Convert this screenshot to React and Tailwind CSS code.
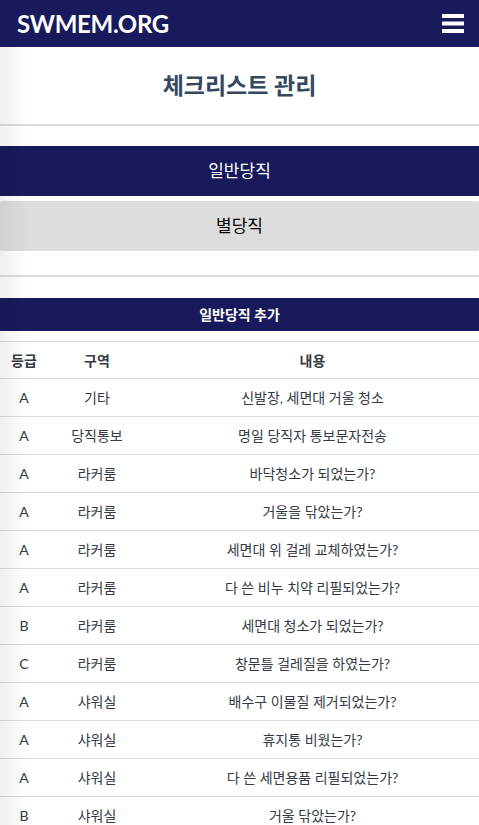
import React from "react";

const rows = [
  ["A", "기타", "신발장, 세면대 거울 청소"],
  ["A", "당직통보", "명일 당직자 통보문자전송"],
  ["A", "라커룸", "바닥청소가 되었는가?"],
  ["A", "라커룸", "거울을 닦았는가?"],
  ["A", "라커룸", "세면대 위 걸레 교체하였는가?"],
  ["A", "라커룸", "다 쓴 비누 치약 리필되었는가?"],
  ["B", "라커룸", "세면대 청소가 되었는가?"],
  ["C", "라커룸", "창문틀 걸레질을 하였는가?"],
  ["A", "샤워실", "배수구 이물질 제거되었는가?"],
  ["A", "샤워실", "휴지통 비웠는가?"],
  ["A", "샤워실", "다 쓴 세면용품 리필되었는가?"],
  ["B", "샤워실", "거울 닦았는가?"],
];

const MenuIcon = () => (
  <svg width="22" height="19" viewBox="0 0 22 19" fill="#fff">
    <rect x="0" y="0" width="22" height="4" rx="0.5" />
    <rect x="0" y="7.5" width="22" height="4" rx="0.5" />
    <rect x="0" y="15" width="22" height="4" rx="0.5" />
  </svg>
);

const App = () => {
  return (
    <div
      className="relative min-h-[825px] bg-white"
      style={{ fontFamily: "Lato, 'Noto Sans CJK KR', sans-serif" }}
    >
      <header className="flex h-[47px] items-center justify-between bg-[#181a5b] pl-[17px] pr-[15px]">
        <span className="text-[24px] font-bold leading-none tracking-[-0.3px] text-white">
          SWMEM.ORG
        </span>
        <MenuIcon />
      </header>

      <div className="flex h-[77px] items-center justify-center">
        <h1 className="text-[23px] font-bold text-[#34495e]">체크리스트 관리</h1>
      </div>
      <div className="h-[2px] bg-[#dddddd]" />

      <div className="mt-[20px] flex flex-col gap-[5px]">
        <button
          type="button"
          className="flex h-[50px] items-center justify-center bg-[#181a5b] text-[17px] text-white"
        >
          일반당직
        </button>
        <button
          type="button"
          className="flex h-[50px] items-center justify-center rounded-[2px] bg-[#dddddd] text-[17px] text-black"
        >
          별당직
        </button>
      </div>

      <div className="mt-[24px] h-[2px] bg-[#dddddd]" />

      <div className="mt-[21px] flex h-[33px] items-center justify-center bg-[#181a5b] text-[14px] font-bold text-white">
        일반당직 추가
      </div>

      <table className="mt-[10px] w-full border-collapse text-[14px] text-[#333a44]">
        <thead>
          <tr className="h-[37px] border-t border-b border-[#dddddd]">
            <th className="w-[48px] text-center font-bold">등급</th>
            <th className="w-[98px] text-center font-bold">구역</th>
            <th className="text-center font-bold">내용</th>
          </tr>
        </thead>
        <tbody>
          {rows.map((r, i) => (
            <tr key={i} className="h-[38px] border-b border-[#dddddd]">
              <td className="text-center">{r[0]}</td>
              <td className="text-center">{r[1]}</td>
              <td className="text-center">{r[2]}</td>
            </tr>
          ))}
        </tbody>
      </table>

      <div className="pointer-events-none absolute bottom-0 left-0 top-[47px] w-[30px] bg-gradient-to-r from-[rgba(0,0,0,0.06)] to-transparent" />
    </div>
  );
};

export default App;
